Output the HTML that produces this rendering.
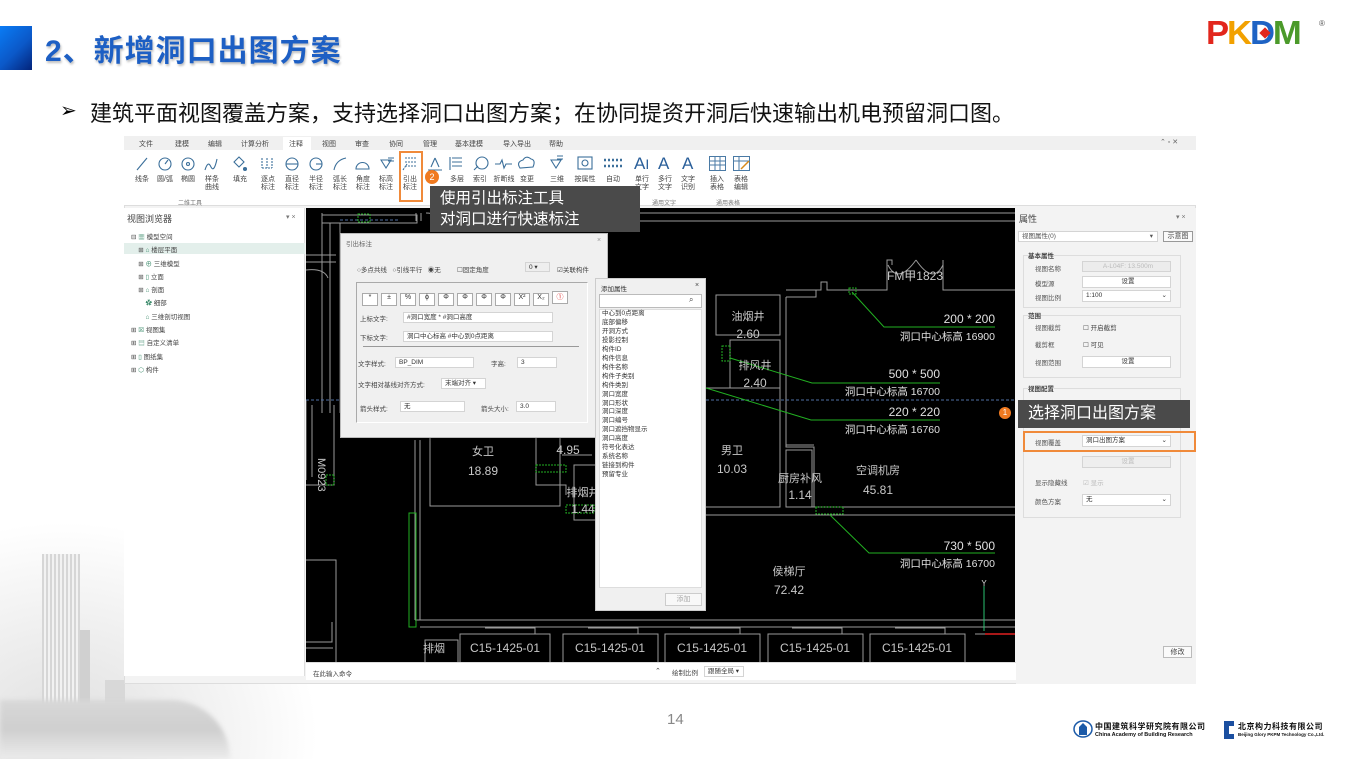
<!DOCTYPE html>
<html><head><meta charset="utf-8">
<style>
*{margin:0;padding:0;box-sizing:border-box}
body{width:1349px;height:759px;background:#fff;position:relative;overflow:hidden;font-family:"Liberation Sans","Noto Sans CJK SC",sans-serif;color:#333}
.a{position:absolute;white-space:nowrap}
.t7{font-size:7px;color:#444}
.lbl{font-size:7px;color:#444;text-align:center;line-height:8px}
.inp{position:absolute;background:#fff;border:1px solid #d4d4d4;font-size:6.5px;color:#333;padding-left:3px;line-height:9px}
</style></head><body>

<!-- bottom-left building decoration -->
<div class="a" style="left:0;top:520px;width:320px;height:239px;background:radial-gradient(ellipse at 20% 90%,#e0e0e0 0%,#efefef 35%,#fff 70%)"></div>
<div class="a" style="left:42px;top:554px;width:38px;height:150px;background:repeating-linear-gradient(90deg,#d6d6d6 0 2px,#f2f2f2 2px 4px)"></div>
<div class="a" style="left:80px;top:630px;width:10px;height:80px;background:#d0d0d0"></div>
<div class="a" style="left:105px;top:680px;width:20px;height:40px;background:#d8d8d8"></div>
<div class="a" style="left:0;top:700px;width:230px;height:59px;background:linear-gradient(180deg,#d8d8d8,#cfcfcf 50%,#ececec);border-radius:0 60px 0 0;filter:blur(2px)"></div>

<!-- title -->
<div class="a" style="left:0;top:26px;width:32px;height:44px;background:linear-gradient(135deg,#0a7cf5,#0b58c8 55%,#03237a)"></div>
<div class="a" style="left:45px;top:26px;font-size:30px;font-weight:bold;color:#1d5fc4;text-shadow:1px 2px 2px rgba(0,0,0,.25);letter-spacing:1px">2、新增洞口出图方案</div>
<!-- PKPM logo -->
<div class="a" style="left:1206px;top:14px;font-size:33px;font-weight:900;font-family:'Liberation Sans',sans-serif;letter-spacing:-2px;line-height:38px;transform:scaleX(1.05);transform-origin:left">
<span style="color:#e2261c">P</span><span style="color:#f2a100">K</span><span style="color:#1e63c4">D</span><span style="color:#4b9a2a">M</span></div>
<div class="a" style="left:1319px;top:19px;font-size:8px;color:#555">®</div>
<div class="a" style="left:1261px;top:29px;width:8px;height:8px;background:#e2261c;transform:rotate(45deg)"></div>

<!-- bullet -->
<div class="a" style="left:60px;top:98px;font-size:20px;color:#000">➢</div>
<div class="a" style="left:90px;top:96px;font-size:22px;color:#111">建筑平面视图覆盖方案，支持选择洞口出图方案；在协同提资开洞后快速输出机电预留洞口图。</div>

<!-- screenshot frame -->
<div class="a" style="left:124px;top:136px;width:1072px;height:548px;background:#f3f3f3;border:1px solid #ddd"></div>
<div class="a" style="left:124px;top:136px;width:1072px;height:14px;background:#f0f0f0"></div>
<div class="a" style="left:283px;top:137px;width:28px;height:14px;background:#fff"></div>
<div class="a t7" style="left:139px;top:139px">文件</div>
<div class="a t7" style="left:175px;top:139px">建模</div>
<div class="a t7" style="left:208px;top:139px">编辑</div>
<div class="a t7" style="left:241px;top:139px">计算分析</div>
<div class="a t7" style="left:289px;top:139px">注释</div>
<div class="a t7" style="left:322px;top:139px">视图</div>
<div class="a t7" style="left:355px;top:139px">审查</div>
<div class="a t7" style="left:389px;top:139px">协同</div>
<div class="a t7" style="left:423px;top:139px">管理</div>
<div class="a t7" style="left:455px;top:139px">基本建模</div>
<div class="a t7" style="left:503px;top:139px">导入导出</div>
<div class="a t7" style="left:549px;top:139px">帮助</div>
<div class="a t7" style="left:1160px;top:138px;color:#666">⌃ ▫ ✕</div>
<!-- ribbon -->
<div class="a" style="left:124px;top:150px;width:1072px;height:56px;background:#fff;border-bottom:1px solid #ddd"></div>
<svg class="a" style="left:124px;top:150px" width="640" height="30" viewBox="124 150 640 30" fill="none" stroke="#3b6f9a" stroke-width="1.1">
<line x1="137" y1="170" x2="147" y2="158"/>
<circle cx="165" cy="164" r="6"/><line x1="165" y1="164" x2="168" y2="160"/>
<circle cx="188" cy="164" r="6"/><circle cx="188" cy="164" r="1.5"/>
<path d="M205 170 q3 -10 6 -3 q3 6 6 -8"/>
<path d="M234 162 l5 -5 l5 5 l-5 5z"/><circle cx="245" cy="169" r="1.5" fill="#3b6f9a"/>
<path d="M262 158v10 M267 158v10 M272 158v10 M262 168h10" stroke-dasharray="2 1"/>
<circle cx="292" cy="164" r="6"/><line x1="286" y1="164" x2="298" y2="164"/>
<circle cx="316" cy="164" r="6"/><line x1="316" y1="164" x2="322" y2="164"/>
<path d="M334 170 q2 -10 12 -12"/>
<path d="M356 169 h13 a6.5 6.5 0 0 0 -13 0z"/>
<path d="M381 160 l5 8 l5 -8z M388 158h6 M388 161h6"/>
<path d="M403 170 l4 -6 M405 158h12 M405 162h12 M405 166h12" stroke-dasharray="2 1"/>
<path d="M428 170h14 M435 158 l-4 9 M435 158 l4 9"/>
<path d="M450 157v13 M452 158h10 M452 162h10 M452 166h10"/>
<circle cx="482" cy="163" r="6"/><path d="M474 170 l4 -4"/>
<path d="M495 164h5 l2 -4 l2 8 l2 -4 h6"/>
<path d="M520 168 q-4 -6 3 -8 q3 -5 8 -1 q5 1 2 8z"/>
<path d="M551 160 l5 8 l5 -8z M557 156h6 M557 159h6"/>
<rect x="578" y="157" width="14" height="12"/><circle cx="585" cy="163" r="3"/>
<path d="M604 160h18 M604 166h18" stroke-dasharray="2 2" stroke-width="2.5"/>
</svg>
<div class="a" style="left:634px;top:154px;font-size:17px;color:#2a5f9a">A<span style="font-size:14px">I</span></div>
<div class="a" style="left:658px;top:154px;font-size:17px;color:#2a5f9a">A</div>
<div class="a" style="left:682px;top:154px;font-size:17px;color:#2a5f9a">A</div>
<svg class="a" style="left:708px;top:155px" width="45" height="18" fill="none" stroke="#4a7aa5"><rect x="1.5" y="1.5" width="16" height="14"/><path d="M1.5 6h16 M1.5 10h16 M7 1.5v14 M12 1.5v14"/><rect x="25.5" y="1.5" width="16" height="14"/><path d="M25.5 6h16 M31 1.5v14" /><path d="M33 14 l8 -8" stroke="#d98a1a" stroke-width="1.5"/></svg>
<div class="a lbl" style="left:130px;top:176px;width:24px">线条</div>
<div class="a lbl" style="left:153px;top:176px;width:24px">圆/弧</div>
<div class="a lbl" style="left:176px;top:176px;width:24px">椭圆</div>
<div class="a lbl" style="left:200px;top:176px;width:24px">样条<br>曲线</div>
<div class="a lbl" style="left:228px;top:176px;width:24px">填充</div>
<div class="a lbl" style="left:256px;top:176px;width:24px">逐点<br>标注</div>
<div class="a lbl" style="left:280px;top:176px;width:24px">直径<br>标注</div>
<div class="a lbl" style="left:304px;top:176px;width:24px">半径<br>标注</div>
<div class="a lbl" style="left:328px;top:176px;width:24px">弧长<br>标注</div>
<div class="a lbl" style="left:351px;top:176px;width:24px">角度<br>标注</div>
<div class="a lbl" style="left:374px;top:176px;width:24px">标高<br>标注</div>
<div class="a lbl" style="left:398px;top:176px;width:24px">引出<br>标注</div>
<div class="a lbl" style="left:445px;top:176px;width:24px">多层</div>
<div class="a lbl" style="left:468px;top:176px;width:24px">索引</div>
<div class="a lbl" style="left:492px;top:176px;width:24px">折断线</div>
<div class="a lbl" style="left:515px;top:176px;width:24px">变更</div>
<div class="a lbl" style="left:545px;top:176px;width:24px">三维</div>
<div class="a lbl" style="left:573px;top:176px;width:24px">按属性</div>
<div class="a lbl" style="left:601px;top:176px;width:24px">自动</div>
<div class="a lbl" style="left:630px;top:176px;width:24px">单行<br>文字</div>
<div class="a lbl" style="left:653px;top:176px;width:24px">多行<br>文字</div>
<div class="a lbl" style="left:676px;top:176px;width:24px">文字<br>识别</div>
<div class="a lbl" style="left:705px;top:176px;width:24px">插入<br>表格</div>
<div class="a lbl" style="left:729px;top:176px;width:24px">表格<br>编辑</div>
<div class="a t7" style="left:178px;top:198px;font-size:6px;color:#777">二维工具</div>
<div class="a t7" style="left:652px;top:198px;font-size:6px;color:#777">通用文字</div>
<div class="a t7" style="left:716px;top:198px;font-size:6px;color:#777">通用表格</div>
<div class="a" style="left:399px;top:151px;width:24px;height:51px;border:2px solid #f08a3a"></div>

<!-- left panel -->
<div class="a" style="left:124px;top:208px;width:181px;height:468px;background:#fff;border-right:1px solid #ddd"></div>
<div class="a" style="left:127px;top:212px;font-size:9px;color:#444">视图浏览器</div>
<div class="a t7" style="left:286px;top:213px;color:#777">▾ ×</div>
<div class="a" style="left:124px;top:243px;width:181px;height:11px;background:#e3efeb"></div>
<div class="a t7" style="left:131px;top:231px;line-height:13.3px;font-size:6.5px">⊟ <span style="color:#3a8a6a">▦</span> 模型空间<br>&nbsp;&nbsp;&nbsp; ⊞ <span style="color:#3a8a6a">⌂</span> 楼层平面<br>&nbsp;&nbsp;&nbsp; ⊞ <span style="color:#3a8a6a">⊕</span> 三维模型<br>&nbsp;&nbsp;&nbsp; ⊞ <span style="color:#3a8a6a">▯</span> 立面<br>&nbsp;&nbsp;&nbsp; ⊞ <span style="color:#3a8a6a">⌂</span> 剖面<br>&nbsp;&nbsp;&nbsp;&nbsp;&nbsp;&nbsp;&nbsp; <span style="color:#3a8a6a">✿</span> 细部<br>&nbsp;&nbsp;&nbsp;&nbsp;&nbsp;&nbsp;&nbsp; <span style="color:#3a8a6a">⌂</span> 三维剖切视图<br>⊞ <span style="color:#3a8a6a">☒</span> 视图集<br>⊞ <span style="color:#3a8a6a">▤</span> 自定义清单<br>⊞ <span style="color:#3a8a6a">▯</span> 图纸集<br>⊞ <span style="color:#3a8a6a">⬡</span> 构件</div>

<!-- CAD area -->
<svg class="a" style="left:306px;top:208px" width="709" height="454" viewBox="306 208 709 454" font-family="Liberation Sans,Noto Sans CJK SC,sans-serif">
<rect x="306" y="208" width="709" height="454" fill="#000"/>
<g stroke="#9a9a9a" stroke-width="1" fill="none">
<path d="M322 215h95 v8 h-95 M330 223v190 M322 213v200 M340 223v190"/>
<path d="M416 213v8 M421 213v8 M426 213 q12 0 16 10 M474 213 q-12 0 -16 10 M474 213v8 M480 213h535 M480 221h535"/>
<path d="M306 255h30 M306 262h30 M306 270q18 -2 22 8"/>
<path d="M786 290h35 v-8 h6 v8 h60 v-30 h5 v5 M943 260v30 h72 M888 265 q10 20 28 -5 M943 265 q-10 20 -27 -5"/>
<path d="M786 297h30 v-7 M786 297v150 h28 v60 M716 295h64v40h-64z M730 340h50v48h-50z M705 342v60 M700 388h80 v119 h-80"/>
<path d="M786 445h28 M786 450h26v57h-26z M812 507h203 M700 515h315"/>
<path d="M415 440v180 M420 440v180 M415 620h600 M420 627h595 M430 436h130v70h-130z M536 430v55h30v10 M562 455h30 M574 465h50v55h-50z"/>
<path d="M306 560h30v150 M306 642h26v-20 M306 648h27"/>
<path d="M425 640h33v30h-33z M460 634h90v40h-90z M563 634h95v40h-95z M665 634h95v40h-95z M768 634h95v40h-95z M870 634h95v40h-95z M975 634h40"/>
<path d="M485 628h50v6 M588 628h50v6 M690 628h50v6 M792 628h50v6 M895 628h50v6"/>
<path d="M306 400v80 M312 405v72 M306 485h28v-80"/>
</g>
<line x1="306" y1="400" x2="1015" y2="400" stroke="#4f6fa5" stroke-dasharray="3 2"/>
<line x1="340" y1="220" x2="400" y2="220" stroke="#4f6fa5" stroke-dasharray="3 2"/>
<g stroke="#22b022" fill="none">
<rect x="358" y="214" width="12" height="8" stroke-dasharray="2 1"/>
<rect x="849" y="288" width="7" height="6" stroke-dasharray="2 1"/>
<rect x="722" y="346" width="8" height="15" stroke-dasharray="2 1"/>
<rect x="409" y="513" width="7" height="114"/>
<rect x="326" y="475" width="8" height="10" stroke-dasharray="2 1"/>
<rect x="536" y="465" width="30" height="7" stroke-dasharray="2 1"/>
<rect x="566" y="505" width="28" height="8" stroke-dasharray="2 1"/>
<rect x="816" y="507" width="27" height="7" stroke-dasharray="2 1"/>
<path d="M852 292 L884 327 H995 M730 358 L812 383 H940 M706 388 L811 420 H940 M830 515 L869 553 H995"/>
<line x1="984" y1="586" x2="984" y2="631" stroke="#2ac070"/>
</g>
<line x1="985" y1="634" x2="1015" y2="634" stroke="#e02020" stroke-width="1.5"/>
<g fill="#e0e0e0" font-size="12">
<text x="995" y="323" text-anchor="end">200 * 200</text>
<text x="995" y="340" text-anchor="end" font-size="10.5">洞口中心标高 16900</text>
<text x="940" y="378" text-anchor="end">500 * 500</text>
<text x="940" y="395" text-anchor="end" font-size="10.5">洞口中心标高 16700</text>
<text x="940" y="416" text-anchor="end">220 * 220</text>
<text x="940" y="433" text-anchor="end" font-size="10.5">洞口中心标高 16760</text>
<text x="995" y="550" text-anchor="end">730 * 500</text>
<text x="995" y="567" text-anchor="end" font-size="10.5">洞口中心标高 16700</text>
</g>
<g fill="#c8c8c8" font-size="12" text-anchor="middle">
<text x="915" y="280">FM甲1823</text>
<text x="748" y="320" font-size="11">油烟井</text><text x="748" y="338">2.60</text>
<text x="755" y="369" font-size="11">排风井</text><text x="755" y="387">2.40</text>
<text x="732" y="454" font-size="11">男卫</text><text x="732" y="473">10.03</text>
<text x="800" y="482" font-size="11">厨房补风</text><text x="800" y="499">1.14</text>
<text x="878" y="474" font-size="11">空调机房</text><text x="878" y="494">45.81</text>
<text x="789" y="575" font-size="11">侯梯厅</text><text x="789" y="594">72.42</text>
<text x="483" y="455" font-size="11">女卫</text><text x="483" y="475">18.89</text>
<text x="568" y="454">4.95</text>
<text x="583" y="496" font-size="11">排烟井</text><text x="583" y="513">1.44</text>
<text x="434" y="652" font-size="11">排烟</text>
<text x="505" y="652">C15-1425-01</text><text x="610" y="652">C15-1425-01</text><text x="712" y="652">C15-1425-01</text><text x="815" y="652">C15-1425-01</text><text x="917" y="652">C15-1425-01</text>
<text x="984" y="586" font-size="8" fill="#ddd">Y</text>
</g>
<text x="318" y="480" fill="#c8c8c8" font-size="11" transform="rotate(90 318 480) translate(-22 0)">M0923</text>
</svg>

<!-- command bar -->
<div class="a" style="left:306px;top:662px;width:890px;height:18px;background:#fff;border-top:1px solid #ddd"></div>
<div class="a t7" style="left:313px;top:668px;font-size:6.5px">在此输入命令</div>
<div class="a t7" style="left:655px;top:667px">⌃</div>
<div class="a t7" style="left:672px;top:667px;font-size:6.5px">绘制比例</div>
<div class="inp" style="left:704px;top:666px;width:40px;height:11px">跟随全局 ▾</div>

<!-- dialog 引出标注 -->
<div class="a" style="left:340px;top:233px;width:268px;height:205px;background:#f0f0f0;border:1px solid #bbb;box-shadow:0 0 4px rgba(0,0,0,.4)"></div>
<div class="a t7" style="left:346px;top:238px;color:#666;font-size:6.5px">引出标注</div>
<div class="a t7" style="left:597px;top:237px;color:#999">×</div>
<div class="a t7" style="left:357px;top:264px;font-size:6.5px">○多点共线 &nbsp;&nbsp;○引线平行 &nbsp;&nbsp;◉无 &nbsp;&nbsp;&nbsp;&nbsp;&nbsp;&nbsp;&nbsp;&nbsp;☐固定角度</div>
<div class="inp" style="left:525px;top:262px;width:25px;height:10px;background:#eee">0 ▾</div>
<div class="a t7" style="left:557px;top:264px;font-size:6.5px">☑关联构件</div>
<div class="a" style="left:356px;top:282px;width:232px;height:141px;border:1px solid #aaa;border-right-color:#fff;border-bottom-color:#fff"></div>
<div class="a" style="left:362px;top:291px;font-size:7px;color:#333;letter-spacing:0">
<span style="display:inline-block;width:16px;height:13px;border:1px solid #aaa;background:#fff;text-align:center;margin-right:3px">*</span><span style="display:inline-block;width:16px;height:13px;border:1px solid #aaa;background:#fff;text-align:center;margin-right:3px">±</span><span style="display:inline-block;width:16px;height:13px;border:1px solid #aaa;background:#fff;text-align:center;margin-right:3px">%</span><span style="display:inline-block;width:16px;height:13px;border:1px solid #aaa;background:#fff;text-align:center;margin-right:3px">ϕ</span><span style="display:inline-block;width:16px;height:13px;border:1px solid #aaa;background:#fff;text-align:center;margin-right:3px">Φ</span><span style="display:inline-block;width:16px;height:13px;border:1px solid #aaa;background:#fff;text-align:center;margin-right:3px">Φ</span><span style="display:inline-block;width:16px;height:13px;border:1px solid #aaa;background:#fff;text-align:center;margin-right:3px">Φ</span><span style="display:inline-block;width:16px;height:13px;border:1px solid #aaa;background:#fff;text-align:center;margin-right:3px">Φ</span><span style="display:inline-block;width:16px;height:13px;border:1px solid #aaa;background:#fff;text-align:center;margin-right:3px">X²</span><span style="display:inline-block;width:16px;height:13px;border:1px solid #aaa;background:#fff;text-align:center;margin-right:3px">X₂</span><span style="display:inline-block;width:16px;height:13px;border:1px solid #aaa;background:#fff;text-align:center;color:#d33">①</span></div>
<div class="a t7" style="left:360px;top:313px;font-size:6.5px">上标文字:</div>
<div class="inp" style="left:403px;top:312px;width:150px;height:11px">#洞口宽度 * #洞口高度</div>
<div class="a t7" style="left:360px;top:332px;font-size:6.5px">下标文字:</div>
<div class="inp" style="left:403px;top:331px;width:150px;height:11px">洞口中心标高 #中心到0点距离</div>
<div class="a" style="left:363px;top:346px;width:216px;height:1px;background:#999"></div>
<div class="a t7" style="left:358px;top:358px;font-size:6.5px">文字样式:</div>
<div class="inp" style="left:395px;top:357px;width:79px;height:11px">BP_DIM</div>
<div class="a t7" style="left:491px;top:358px;font-size:6.5px">字高:</div>
<div class="inp" style="left:517px;top:357px;width:40px;height:11px">3</div>
<div class="a t7" style="left:358px;top:379px;font-size:6.5px">文字相对基线对齐方式:</div>
<div class="inp" style="left:441px;top:378px;width:45px;height:11px">末端对齐 ▾</div>
<div class="a t7" style="left:360px;top:403px;font-size:6.5px">箭头样式:</div>
<div class="inp" style="left:400px;top:401px;width:65px;height:11px">无</div>
<div class="a t7" style="left:481px;top:403px;font-size:6.5px">箭头大小:</div>
<div class="inp" style="left:516px;top:401px;width:40px;height:11px">3.0</div>

<!-- 添加属性 list -->
<div class="a" style="left:595px;top:278px;width:111px;height:333px;background:#f0f0f0;border:1px solid #ccc"></div>
<div class="a t7" style="left:601px;top:283px;font-size:6.5px;color:#333">添加属性</div>
<div class="a t7" style="left:695px;top:282px">×</div>
<div class="a" style="left:599px;top:294px;width:103px;height:14px;background:#fff;border:1px solid #bbb"></div>
<div class="a t7" style="left:689px;top:295px;font-size:8px">⌕</div>
<div class="a" style="left:599px;top:309px;width:103px;height:279px;background:#fff;border:1px solid #ddd"></div>
<div class="a t7" style="left:602px;top:310px;font-size:6.5px;line-height:8.95px;color:#333">中心到0点距离<br>底部偏移<br>开洞方式<br>投影控制<br>构件ID<br>构件信息<br>构件名称<br>构件子类别<br>构件类别<br>洞口宽度<br>洞口形状<br>洞口深度<br>洞口编号<br>洞口遮挡物显示<br>洞口高度<br>符号化表达<br>系统名称<br>链接到构件<br>预留专业</div>
<div class="a t7" style="left:665px;top:593px;width:37px;height:13px;border:1px solid #ccc;background:#f8f8f8;text-align:center;line-height:12px;color:#aaa">添加</div>

<!-- right panel -->
<div class="a" style="left:1016px;top:208px;width:180px;height:476px;background:#f3f3f3"></div>
<div class="a" style="left:1019px;top:212px;font-size:9px;color:#444">属性</div>
<div class="a t7" style="left:1176px;top:213px;color:#777">▾ ×</div>
<div class="inp" style="left:1018px;top:231px;width:140px;height:11px;color:#555">视图属性(0) <span style="float:right;margin-right:4px">▾</span></div>
<div class="a t7" style="left:1163px;top:231px;width:30px;height:11px;border:1px solid #999;background:#fafafa;text-align:center;line-height:10px">示意图</div>
<div class="a" style="left:1023px;top:255px;width:158px;height:53px;border:1px solid #ddd"></div>
<div class="a t7" style="left:1028px;top:250px;background:#f3f3f3;font-weight:bold;font-size:6.5px">基本属性</div>
<div class="a t7" style="left:1035px;top:263px;font-size:6.5px;color:#555">视图名称</div>
<div class="inp" style="left:1082px;top:261px;width:89px;height:11px;background:#ececec;color:#bbb;text-align:center">A-L04F: 13.500m</div>
<div class="a t7" style="left:1035px;top:278px;font-size:6.5px;color:#555">模型源</div>
<div class="inp" style="left:1082px;top:276px;width:89px;height:12px;text-align:center">设置</div>
<div class="a t7" style="left:1035px;top:292px;font-size:6.5px;color:#555">视图比例</div>
<div class="inp" style="left:1082px;top:290px;width:89px;height:12px">1:100 <span style="float:right;margin-right:3px">⌄</span></div>
<div class="a" style="left:1023px;top:315px;width:158px;height:63px;border:1px solid #ddd"></div>
<div class="a t7" style="left:1028px;top:310px;background:#f3f3f3;font-weight:bold;font-size:6.5px">范围</div>
<div class="a t7" style="left:1035px;top:322px;font-size:6.5px;color:#555">视图截剪</div>
<div class="a t7" style="left:1083px;top:322px;font-size:6.5px">☐ 开启截剪</div>
<div class="a t7" style="left:1035px;top:339px;font-size:6.5px;color:#555">截剪框</div>
<div class="a t7" style="left:1083px;top:339px;font-size:6.5px">☐ 可见</div>
<div class="a t7" style="left:1035px;top:357px;font-size:6.5px;color:#555">视图范围</div>
<div class="inp" style="left:1082px;top:356px;width:89px;height:12px;text-align:center">设置</div>
<div class="a" style="left:1023px;top:388px;width:158px;height:130px;border:1px solid #ddd"></div>
<div class="a t7" style="left:1028px;top:383px;background:#f3f3f3;font-weight:bold;font-size:6.5px">视图配置</div>
<div class="a t7" style="left:1035px;top:437px;font-size:6.5px;color:#555">视图覆盖</div>
<div class="inp" style="left:1082px;top:435px;width:89px;height:12px">洞口出图方案 <span style="float:right;margin-right:3px">⌄</span></div>
<div class="inp" style="left:1082px;top:456px;width:89px;height:12px;background:#eee;color:#bbb;text-align:center">设置</div>
<div class="a t7" style="left:1035px;top:477px;font-size:6.5px;color:#555">显示隐藏线</div>
<div class="a t7" style="left:1083px;top:477px;font-size:6.5px;color:#bbb">☑ 显示</div>
<div class="a t7" style="left:1035px;top:496px;font-size:6.5px;color:#555">颜色方案</div>
<div class="inp" style="left:1082px;top:494px;width:89px;height:12px">无 <span style="float:right;margin-right:3px">⌄</span></div>
<div class="a t7" style="left:1163px;top:646px;width:29px;height:12px;border:1px solid #bbb;background:#fafafa;text-align:center;line-height:11px">修改</div>
<div class="a" style="left:1023px;top:431px;width:173px;height:21px;border:2px solid #f08a3a"></div>

<!-- tooltips -->
<div class="a" style="left:430px;top:186px;width:210px;height:46px;background:#4a4a4a;color:#fff;font-size:15.5px;line-height:21px;padding:2px 0 0 10px">使用引出标注工具<br>对洞口进行快速标注</div>
<div class="a" style="left:425px;top:170px;width:14px;height:14px;border-radius:50%;background:#f07a20;color:#fff;font-size:9px;text-align:center;line-height:14px">2</div>
<div class="a" style="left:1018px;top:400px;width:172px;height:28px;background:#4a4a4a;color:#fff;font-size:16px;line-height:28px;padding-left:10px">选择洞口出图方案</div>
<div class="a" style="left:999px;top:407px;width:12px;height:12px;border-radius:50%;background:#f07a20;color:#fff;font-size:8px;text-align:center;line-height:12px">1</div>

<!-- footer -->
<div class="a" style="left:667px;top:711px;font-size:15px;color:#888">14</div>
<svg class="a" style="left:1073px;top:719px" width="20" height="20"><ellipse cx="10" cy="10" rx="9" ry="8" fill="none" stroke="#1b5aa8" stroke-width="1.5"/><path d="M6 16v-8l4-4 4 4v8z" fill="#1b5aa8"/></svg>
<div class="a" style="left:1095px;top:721px;font-size:8px;font-weight:bold;color:#111;letter-spacing:0.5px">中国建筑科学研究院有限公司</div>
<div class="a" style="left:1095px;top:732px;font-size:5.5px;font-weight:bold;color:#111">China Academy of Building Research</div>
<svg class="a" style="left:1222px;top:719px" width="14" height="22"><path d="M2 2h10v5h-5v8h5v5h-10z" fill="#1b4fa0"/></svg>
<div class="a" style="left:1238px;top:721px;font-size:8px;font-weight:bold;color:#111;letter-spacing:0.5px">北京构力科技有限公司</div>
<div class="a" style="left:1238px;top:732px;font-size:4.5px;font-weight:bold;color:#111">Beijing Glory PKPM Technology Co.,Ltd.</div>
</body></html>
